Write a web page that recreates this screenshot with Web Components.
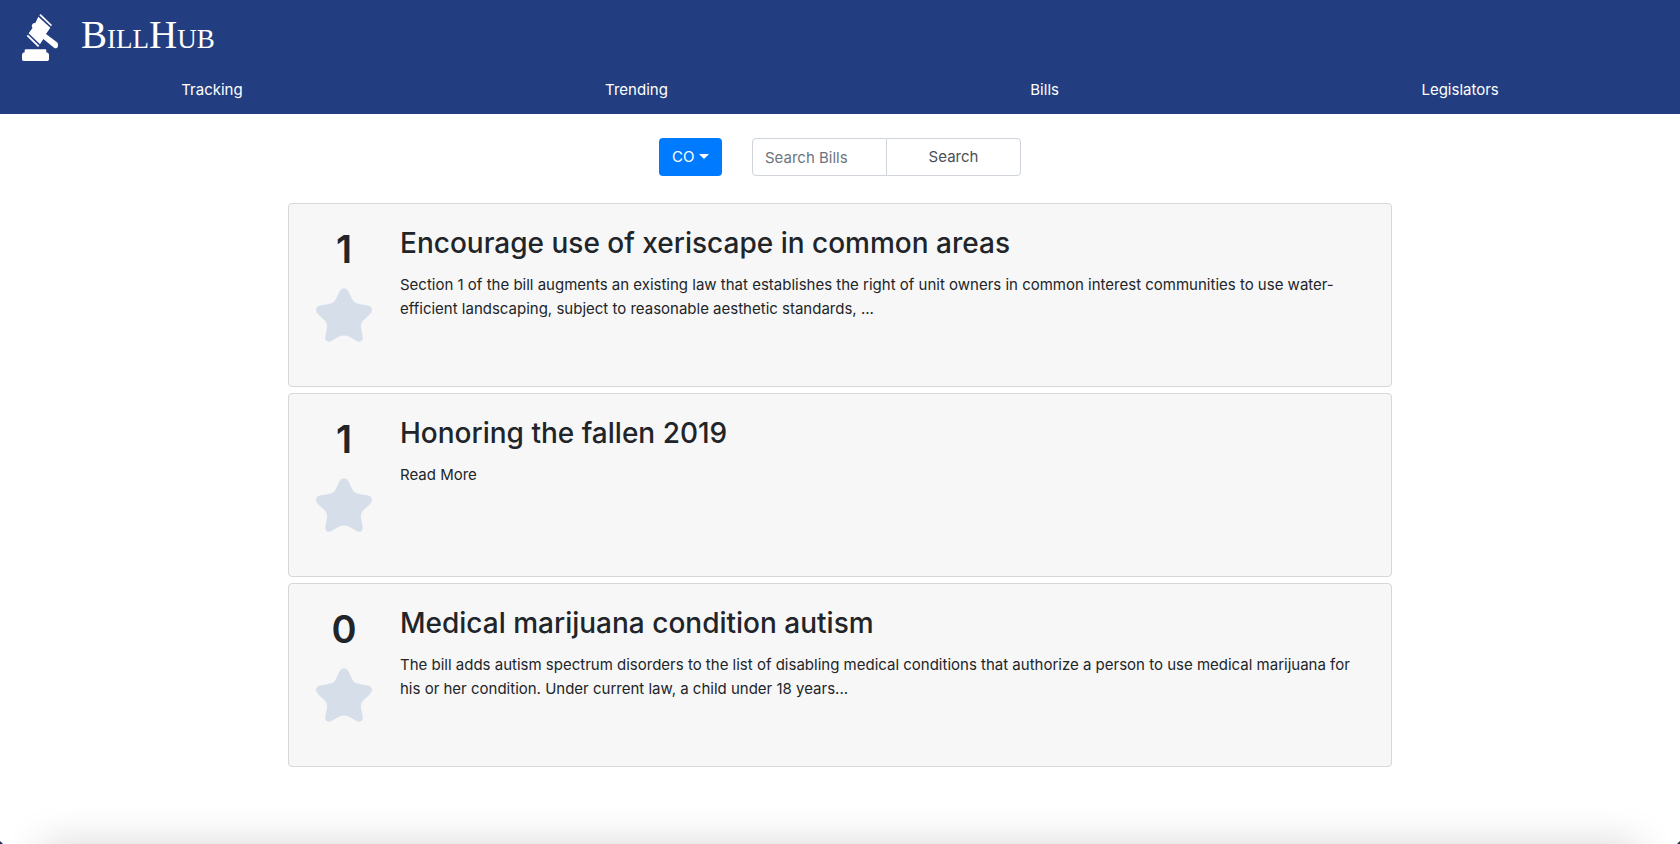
<!DOCTYPE html>
<html lang="en">
<head>
<meta charset="utf-8">
<meta name="viewport" content="width=device-width, initial-scale=1">
<title>BillHub</title>
<style>
  body {
    margin: 0;
    background: #fff;
    color: #212529;
    font: 400 15px/24px Inter, "Liberation Sans", sans-serif;
  }
</style>
</head>
<body>
<bill-app></bill-app>

<template id="brand-template">
  <style>
    :host { display: block; }
    a { display: flex; align-items: flex-start; gap: 23px; color: #fff; text-decoration: none; }
    svg { display: block; width: 36px; height: 47px; }
    span { font: 400 39px/42px "Liberation Serif", serif; font-variant-caps: small-caps; }
  </style>
  <a href="#">
    <svg viewBox="66 41 108 141" fill="#fff" aria-hidden="true">
      <path d="M78 147H136Q139 147 139 150V156Q147 157 147 163V177Q147 182 142 182H71Q66 182 66 177V163Q66 157 74 156V150Q74 147 78 147Z"/>
      <path d="M122 41L156 74L153 78L118 45Z"/>
      <path d="M84 103L118 136L114 140L80 107Z"/>
      <path d="M115 49L151 82L138 101L171 126Q175 130 174 136Q173 145 164 144L130 116L120 132L86 99L98 82Q94 80 96 74Q98 67 106 68Z"/>
    </svg>
    <span>BillHub</span>
  </a>
</template>

<template id="header-template">
  <style>
    :host { display: block; background: #233e80; color: #fff; }
    .brand { display: flex; padding: 14px 22px 9px; }
    nav { display: flex; padding-bottom: 4px; }
  </style>
  <div class="brand"><bill-brand></bill-brand></div>
  <nav><slot></slot></nav>
</template>

<template id="link-template">
  <style>
    :host { display: block; flex: 1 1 auto; text-align: center; }
    a { display: block; padding: 8px 16px; color: #fff; text-decoration: none; }
  </style>
  <a href="#"><slot></slot></a>
</template>

<template id="search-template">
  <style>
    :host { display: flex; justify-content: center; gap: 30px; }
    .state { position: relative; display: flex; }
    .state::after {
      content: ""; position: absolute; right: 13px; top: 16px;
      border: 5px solid transparent; border-top-color: #fff; border-bottom: 0;
      pointer-events: none;
    }
    select, input, button { box-sizing: border-box; height: 38px; margin: 0; font: inherit; }
    select {
      appearance: none; width: 63px; padding: 0 13px;
      border: 0; border-radius: 4px; background: #007bff; color: #fff; cursor: pointer;
    }
    form { display: flex; width: 269px; margin: 0; }
    input, button { width: 135px; border: 1px solid #ced4da; background: #fff; color: #495057; }
    input { padding: 0 12px; border-radius: 4px 0 0 4px; }
    input::placeholder { color: #6c757d; opacity: 1; }
    button { margin-left: -1px; padding: 0; border-radius: 0 4px 4px 0; cursor: pointer; }
  </style>
  <div class="state">
    <select aria-label="State"><option>CO</option></select>
  </div>
  <form>
    <input type="text" placeholder="Search Bills" aria-label="Search Bills">
    <button type="button">Search</button>
  </form>
</template>

<template id="card-template">
  <style>
    :host {
      display: grid; grid-template-columns: 70px 1fr; column-gap: 21px;
      box-sizing: border-box; min-height: 184px; padding: 21px 20px;
      border: 1px solid #d7d7d7; border-radius: 4px; background: #f7f7f7;
    }
    .votes { display: flex; flex-direction: column; align-items: center; gap: 15px; }
    .count { font-size: 38px; line-height: 48px; font-weight: 600; }
    button { display: block; padding: 0; border: 0; background: none; color: #d6dfe9; cursor: pointer; }
    svg { display: block; width: 56px; height: 54px; }
    h2 { margin: 0 0 12px; font-size: 28px; line-height: 36px; font-weight: 500; }
    p { margin: 0; }
  </style>
  <div class="votes">
    <span class="count"><slot name="count"></slot></span>
    <button type="button" aria-label="Track this bill">
      <svg viewBox="107 279 170 162" fill="currentColor" aria-hidden="true">
        <path d="M192 279Q201 279 205 287L214 306Q221 323 232 325L264 331Q277 333 277 344Q277 352 269 359L249 378Q243 384 243 394L249 427Q250 441 238 441Q234 441 229 438L208 426Q192 419 176 426L155 438Q150 441 146 441Q134 441 135 427L141 394Q141 384 135 378L115 359Q107 352 107 344Q107 333 120 331L152 325Q163 323 170 306L179 287Q183 279 192 279Z"/>
      </svg>
    </button>
  </div>
  <div>
    <h2><slot name="title"></slot></h2>
    <p><slot></slot></p>
  </div>
</template>

<template id="shade-template">
  <style>
    :host { position: fixed; inset: 0; overflow: hidden; pointer-events: none; }
    .shadow {
      position: absolute; left: 42px; right: 42px; top: 100%; height: 60px;
      box-shadow: 0 0 40px rgba(0, 0, 0, .16);
    }
    .corner { position: absolute; bottom: 0; width: 3px; height: 3px; }
    .left { left: 0; background: linear-gradient(45deg, #1b2a50 40%, transparent 60%); }
    .right { right: 0; background: linear-gradient(-45deg, #1b2a50 40%, transparent 60%); }
  </style>
  <div class="shadow"></div>
  <div class="corner left"></div>
  <div class="corner right"></div>
</template>

<template id="app-template">
  <style>
    :host { display: block; }
    main { padding: 24px 0 48px; }
    .list {
      display: grid; gap: 6px; box-sizing: border-box;
      max-width: 1140px; margin: 27px auto 0; padding: 0 18px;
    }
  </style>
  <bill-header>
    <bill-link>Tracking</bill-link>
    <bill-link>Trending</bill-link>
    <bill-link>Bills</bill-link>
    <bill-link>Legislators</bill-link>
  </bill-header>
  <main>
    <bill-search></bill-search>
    <div class="list">
      <bill-card>
        <span slot="count">1</span>
        <span slot="title">Encourage use of xeriscape in common areas</span>
        Section 1 of the bill augments an existing law that establishes the right of unit owners in common interest communities to use water-efficient landscaping, subject to reasonable aesthetic standards, ...
      </bill-card>
      <bill-card>
        <span slot="count">1</span>
        <span slot="title">Honoring the fallen 2019</span>
        Read More
      </bill-card>
      <bill-card>
        <span slot="count">0</span>
        <span slot="title">Medical marijuana condition autism</span>
        The bill adds autism spectrum disorders to the list of disabling medical conditions that authorize a person to use medical marijuana for his or her condition. Under current law, a child under 18 years...
      </bill-card>
    </div>
  </main>
  <bill-shade></bill-shade>
</template>

<script>
  class BillElement extends HTMLElement {
    constructor() {
      super();
      const template = document.getElementById(this.constructor.template);
      this.attachShadow({ mode: "open" }).append(template.content.cloneNode(true));
    }
  }
  class BillBrand extends BillElement { static template = "brand-template"; }
  class BillHeader extends BillElement { static template = "header-template"; }
  class BillLink extends BillElement { static template = "link-template"; }
  class BillSearch extends BillElement { static template = "search-template"; }
  class BillCard extends BillElement { static template = "card-template"; }
  class BillShade extends BillElement { static template = "shade-template"; }
  class BillApp extends BillElement { static template = "app-template"; }
  customElements.define("bill-brand", BillBrand);
  customElements.define("bill-header", BillHeader);
  customElements.define("bill-link", BillLink);
  customElements.define("bill-search", BillSearch);
  customElements.define("bill-card", BillCard);
  customElements.define("bill-shade", BillShade);
  customElements.define("bill-app", BillApp);
</script>
</body>
</html>
